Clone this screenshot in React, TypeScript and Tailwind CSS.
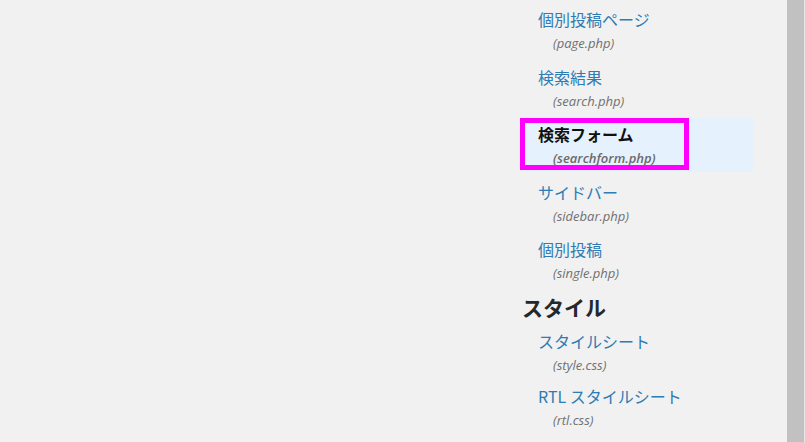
import React from "react";

type Item = { label: string; file: string; active?: boolean };

const themeItems: Item[] = [
  { label: "個別投稿ページ", file: "(page.php)" },
  { label: "検索結果", file: "(search.php)" },
  { label: "検索フォーム", file: "(searchform.php)", active: true },
  { label: "サイドバー", file: "(sidebar.php)" },
  { label: "個別投稿", file: "(single.php)" },
];

const styleItems: Item[] = [
  { label: "スタイルシート", file: "(style.css)" },
  { label: "RTL スタイルシート", file: "(rtl.css)" },
];

const jp = { fontFamily: '"Noto Sans CJK JP", "Noto Sans", sans-serif' };
const lat = { fontFamily: '"Open Sans", "Noto Sans", sans-serif' };

function Row({ item }: { item: Item }) {
  return (
    <li
      className={`relative h-[53.5px] pt-[4px] pl-[18px] ${
        item.active ? "bg-[#e5f1fc]" : ""
      }`}
    >
      <div
        className={`text-[16px] leading-[24px] ${
          item.active ? "font-bold text-[#111]" : "text-[#2f7bb3]"
        }`}
        style={jp}
      >
        {item.label}
      </div>
      <div
        className={`pl-[15px] text-[13px] leading-[24px] italic ${
          item.active ? "font-semibold text-[#6a6a6a]" : "text-[#707070]"
        }`}
        style={lat}
      >
        {item.file}
      </div>
      {item.active && (
        <div className="pointer-events-none absolute left-0 top-0 h-[52px] w-[169px] border-[5px] border-[#ff00ff]" />
      )}
    </li>
  );
}

export default function App() {
  return (
    <div className="flex h-[442px] w-full overflow-hidden bg-[#f1f1f1]">
      <div className="flex-1 pl-[520px] pt-[3px]">
        <ul className="flex w-[233px] flex-col gap-[4px]">
          {themeItems.map((it) => (
            <Row key={it.file} item={it} />
          ))}
        </ul>
        <h3
          className="mt-[5px] pl-[2px] text-[21px] font-bold leading-[30px] text-[#23282d]"
          style={jp}
        >
          スタイル
        </h3>
        <ul className="mt-[3px] flex w-[233px] flex-col gap-[2px]">
          {styleItems.map((it) => (
            <Row key={it.file} item={it} />
          ))}
        </ul>
      </div>
      <div className="w-[17px] bg-[#c1c1c1]" />
      <div className="w-px bg-[#e6e6e6]" />
    </div>
  );
}
